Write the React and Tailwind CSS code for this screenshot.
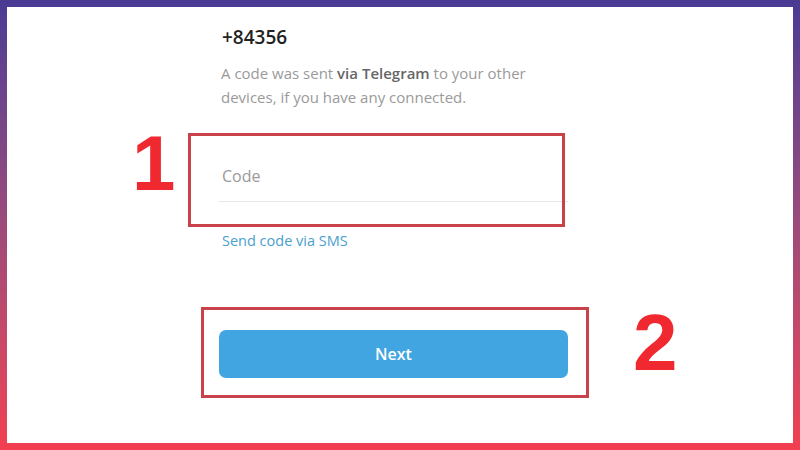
import React from 'react';

const App = () => {
    return (
        <div className="relative w-[800px] h-[450px] p-[7px] bg-linear-to-b from-[#4a3a94] to-[#f23e4f] font-['Open_Sans',sans-serif]">
            <div className="w-full h-full bg-white">
                <div className="ml-[212px] w-[349px] pt-[17px] flex flex-col">
                    <div className="pl-[3px] text-[19px] leading-[26px] font-semibold text-[#222]">+84356</div>
                    <p className="mt-[11px] pl-[2px] text-[15px] leading-[24px] text-[#9a9a9a]">
                        A code was sent <span className="font-semibold text-[#666]">via Telegram</span> to your other devices, if you have any connected.
                    </p>
                    <div className="mt-[41px] h-[52px] flex items-center border-b border-[#e6e6e6]">
                        <input
                            type="text"
                            placeholder="Code"
                            className="w-full pl-[3px] text-[16px] text-[#333] placeholder-[#9a9a9a] outline-none bg-transparent"
                        />
                    </div>
                    <a className="mt-[29px] pl-[3px] text-[14.5px] leading-[20px] text-[#4aa0cd]">Send code via SMS</a>
                    <button className="mt-[79px] h-[48px] w-full rounded-[7px] bg-[#40a5e0] text-white text-[16px] font-semibold">
                        Next
                    </button>
                </div>
            </div>

            {/* annotations */}
            <div className="absolute left-[188px] top-[133px] w-[377px] h-[94px] border-[3px] border-[#c9424a] pointer-events-none" />
            <div className="absolute left-[201px] top-[307px] w-[388px] h-[91px] border-[3px] border-[#c9424a] pointer-events-none" />
            <div className="absolute left-[132px] top-[118px] text-[78px] leading-[90px] font-bold text-[#f0282f] font-['Liberation_Sans',sans-serif]">1</div>
            <div className="absolute left-[633px] top-[297px] text-[80px] leading-[92px] font-bold text-[#f0282f] font-['Liberation_Sans',sans-serif]">2</div>
        </div>
    );
};

export default App;
